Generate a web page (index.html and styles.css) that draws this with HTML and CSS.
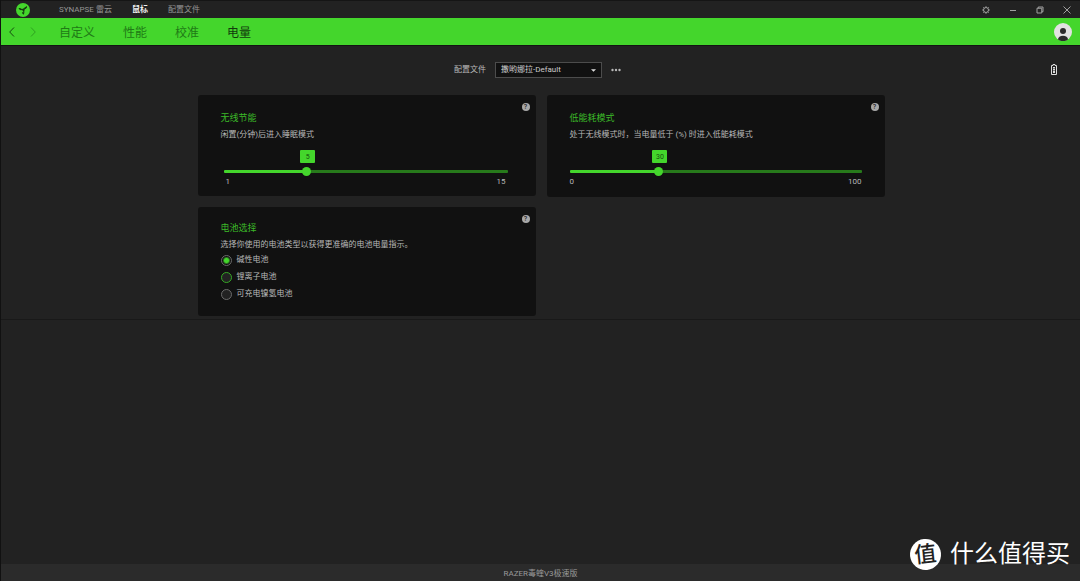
FILE: index.html
```html
<!DOCTYPE html>
<html lang="zh-CN">
<head>
<meta charset="utf-8">
<meta name="viewport" content="width=device-width, initial-scale=1">
<title>SYNAPSE 雷云</title>
<link rel="stylesheet" href="styles.css">
</head>
<body>
<div class="app">
  <header class="titlebar">
    <svg class="logo" viewBox="0 0 28 28" aria-hidden="true">
      <circle cx="14" cy="14" r="14" fill="#44d62c"/>
      <g fill="none" stroke="#163d10" stroke-width="2.2" stroke-linecap="round" stroke-linejoin="round">
        <path d="M15 14C16 17 16 19 15 21.500M15 13.500C12 13.500 9 13 6.500 11M15 13.500C16 11 18 9 21 8"/>
        <path d="M7 11L10 13.500M21 8L19 11M15 21.500L13 19.500"/>
      </g>
      <circle cx="15" cy="13.500" r="2.400" fill="#163d10"/>
    </svg>
    <nav class="tabs">
      <a class="tab" href="#synapse">SYNAPSE 雷云</a>
      <a class="tab tab-active" href="#mouse">鼠标</a>
      <a class="tab" href="#profiles">配置文件</a>
    </nav>
    <div class="window-controls">
      <button class="icon-button" type="button" aria-label="设置">
        <svg viewBox="0 0 16 16"><circle cx="8" cy="8" r="5"/><path d="M8 0.500v2.500M8 13v2.500M0.500 8H3M13 8h2.500M2.700 2.700l1.800 1.800M11.500 11.500l1.800 1.800M13.300 2.700l-1.800 1.800M4.500 11.500l-1.800 1.800"/></svg>
      </button>
      <button class="icon-button" type="button" aria-label="最小化">
        <svg viewBox="0 0 16 16"><path d="M2 9h12"/></svg>
      </button>
      <button class="icon-button" type="button" aria-label="还原">
        <svg viewBox="0 0 16 16"><path d="M2 4.500h9.500V14H2zM4.500 4.500V2H14v9.500h-2.500"/></svg>
      </button>
      <button class="icon-button" type="button" aria-label="关闭">
        <svg viewBox="0 0 16 16"><path d="M1 1l14 14M15 1L1 15"/></svg>
      </button>
    </div>
  </header>

  <div class="navbar">
    <button class="arrow" type="button" aria-label="后退"><svg viewBox="0 0 6 10"><path d="M5 0.500L0.700 5L5 9.500"/></svg></button>
    <button class="arrow arrow-off" type="button" aria-label="前进" disabled><svg viewBox="0 0 6 10"><path d="M1 0.500L5.300 5L1 9.500"/></svg></button>
    <nav class="sections">
      <a class="section" href="#customize">自定义</a>
      <a class="section" href="#performance">性能</a>
      <a class="section" href="#calibration">校准</a>
      <a class="section section-active" href="#power">电量</a>
    </nav>
    <button class="avatar" type="button" aria-label="用户">
      <svg viewBox="0 0 36 36"><circle cx="18" cy="18" r="18" fill="#e2e2e2"/><circle cx="18" cy="16" r="6" fill="#2b2b2b"/><path d="M8 33a10 7.500 0 0 1 20 0a18 18 0 0 1-20 0z" fill="#2b2b2b"/></svg>
    </button>
  </div>

  <main class="content">
    <div class="profile-bar">
      <label class="profile-label" for="profile">配置文件</label>
      <div class="select-wrap">
        <select class="profile-select" id="profile"><option>撒哟娜拉-Default</option></select>
        <svg class="caret" viewBox="0 0 6 3" aria-hidden="true"><path d="M0 0h6L3 3z"/></svg>
      </div>
      <button class="more" type="button" aria-label="更多">
        <svg viewBox="0 0 10 4"><circle cx="1.500" cy="2" r="1.200"/><circle cx="5" cy="2" r="1.200"/><circle cx="8.500" cy="2" r="1.200"/></svg>
      </button>
      <svg class="battery" viewBox="0 0 12 22" role="img" aria-label="电池"><path d="M4 3V1h4v2h3v18H1V3z" fill="none" stroke="#ddd" stroke-width="2"/><path d="M4 6h4v2.500H4zM4 9.500h4V12H4zM4 13h4v5H4z" fill="#ddd"/></svg>
    </div>

    <div class="cards">
      <section class="card">
        <button class="help" type="button" aria-label="帮助">?</button>
        <h2 class="card-title">无线节能</h2>
        <label class="card-text" for="sleep">闲置(分钟)后进入睡眠模式</label>
        <div class="slider slider-inset" style="--at: 0.286">
          <output class="bubble" for="sleep">5</output>
          <input class="range" id="sleep" type="range" min="1" max="15" value="5">
          <div class="limits"><span>1</span><span>15</span></div>
        </div>
      </section>

      <section class="card card-tall">
        <button class="help" type="button" aria-label="帮助">?</button>
        <h2 class="card-title">低能耗模式</h2>
        <label class="card-text" for="lowpower">处于无线模式时，当电量低于 (%) 时进入低能耗模式</label>
        <div class="slider" style="--at: 0.3">
          <output class="bubble" for="lowpower">30</output>
          <input class="range" id="lowpower" type="range" min="0" max="100" value="30">
          <div class="limits"><span>0</span><span>100</span></div>
        </div>
      </section>

      <section class="card card-options">
        <button class="help" type="button" aria-label="帮助">?</button>
        <h2 class="card-title">电池选择</h2>
        <p class="card-text">选择你使用的电池类型以获得更准确的电池电量指示。</p>
        <div class="options">
          <label class="option"><input class="radio" type="radio" name="battery" checked>碱性电池</label>
          <label class="option"><input class="radio radio-focus" type="radio" name="battery">锂离子电池</label>
          <label class="option"><input class="radio" type="radio" name="battery">可充电镍氢电池</label>
        </div>
      </section>
    </div>
  </main>

  <footer class="footer">RAZER毒蝰V3极速版</footer>
  <div class="watermark"><span class="watermark-badge">值</span><span>什么值得买</span></div>
</div>
</body>
</html>
```
FILE: styles.css
```css
* { box-sizing: border-box; }

body {
  margin: 0;
  background: #222;
  color: #b8b8b8;
  font: 8px/12px Roboto, "Noto Sans CJK SC", sans-serif;
}

a { color: inherit; text-decoration: none; }

button {
  display: flex;
  align-items: center;
  justify-content: center;
  padding: 0;
  border: 0;
  background: none;
  color: inherit;
}

.app {
  position: relative;
  display: flex;
  flex-direction: column;
  min-height: 100vh;
  border-left: 1px solid #111;
}

.titlebar {
  display: flex;
  align-items: center;
  height: 18px;
  padding: 0 7px 0 15px;
  border-top: 1px solid #151515;
}

.logo { width: 14px; height: 14px; }

.tabs { display: flex; gap: 20px; margin-left: 29px; color: #949494; }
.tab-active { color: #eee; font-weight: 700; }

.window-controls { display: flex; gap: 15px; margin-left: auto; }
.icon-button { width: 12px; height: 12px; }
.icon-button svg {
  width: 8px;
  height: 8px;
  fill: none;
  stroke: #a0a0a0;
  stroke-width: 2;
}

.navbar {
  display: flex;
  align-items: center;
  height: 27px;
  padding: 0 8px;
  background: #44d62c;
}

.arrow { width: 6px; height: 12px; margin-right: 15px; }
.arrow svg { width: 6px; height: 10px; fill: none; stroke: #164a10; }
.arrow-off svg { stroke: #2fa020; }

.sections {
  display: flex;
  gap: 28px;
  margin-left: 8px;
  padding-top: 2px;
  color: #207a16;
  font-size: 12px;
  line-height: 18px;
}
.section-active { color: #123b0c; }

.avatar { width: 18px; height: 18px; margin-left: auto; }
.avatar svg { width: 18px; height: 18px; }

.content {
  padding: 16px 0 3px;
  border-top: 1px solid #141414;
  border-bottom: 1px solid #191919;
}

.profile-bar {
  position: relative;
  display: flex;
  align-items: center;
  justify-content: center;
  height: 16px;
  padding-right: 6px;
}
.profile-label { margin-right: 9px; }
.select-wrap { position: relative; width: 107px; height: 16px; }
.profile-select {
  display: block;
  width: 100%;
  height: 16px;
  padding: 0 5px;
  appearance: none;
  border: 1px solid #4c4c4c;
  border-radius: 0;
  background: #111;
  color: #ccc;
  font: inherit;
}
.caret { position: absolute; top: 7px; right: 6px; width: 5px; height: 3px; fill: #ddd; }
.more { width: 10px; height: 12px; margin-left: 9px; }
.more svg { width: 10px; height: 4px; fill: #b8b8b8; }
.battery { position: absolute; top: 2px; right: 23px; width: 6px; height: 11px; }

.cards {
  display: grid;
  grid-template-columns: repeat(2, minmax(0, 338px));
  justify-content: center;
  align-items: start;
  gap: 10px 11px;
  margin-top: 17px;
  padding-left: 1px;
}

.card {
  position: relative;
  padding: 16px 23px 8px;
  border-radius: 3px;
  background: #111;
}
.card-tall { padding-bottom: 9px; }
.card-options { padding-top: 14px; padding-bottom: 16px; }
.card-title { margin: 0; color: #3bb928; font-size: 9px; font-weight: 400; line-height: 14px; }
.card-text { display: block; margin: 4px 0 0; }

.help {
  position: absolute;
  top: 8px;
  right: 6px;
  width: 8px;
  height: 8px;
  border-radius: 50%;
  background: #a8a8a8;
  color: #222;
  font: 500 7px/8px Roboto, sans-serif;
}

.slider { position: relative; margin-top: 9px; padding-top: 17px; }
.slider-inset { margin-right: 5px; margin-left: 3px; }
.slider-inset .limits { padding: 0 2px; }

.bubble {
  position: absolute;
  top: 0;
  left: calc(5px + (100% - 9px) * var(--at));
  width: 15px;
  height: 13px;
  margin-left: -7px;
  border-radius: 1px;
  background: #44d62c;
  color: #17500f;
  font-size: 7px;
  line-height: 14px;
  text-align: center;
}

.range {
  display: block;
  width: 100%;
  height: 9px;
  margin: 0;
  appearance: none;
  background: none;
}
.range::-webkit-slider-runnable-track {
  height: 3px;
  border-radius: 1px;
  background: linear-gradient(to right, #44d62c calc(100% * var(--at)), #277a1b 0);
}
.range::-webkit-slider-thumb {
  width: 9px;
  height: 9px;
  margin-top: -3px;
  appearance: none;
  border-radius: 50%;
  background: #44d62c;
}

.limits { display: flex; justify-content: space-between; }

.options { display: flex; flex-direction: column; gap: 5px; margin-top: 3px; }
.option { display: flex; align-items: center; gap: 5px; height: 12px; }

.radio {
  width: 11px;
  height: 11px;
  margin: 0;
  appearance: none;
  border: 1px solid #6a6a6a;
  border-radius: 50%;
  background: #222;
}
.radio:checked { background: radial-gradient(circle, #44d62c 2px, #111 4px); }
.radio-focus { border-color: #35a825; }

.footer {
  height: 17px;
  margin-top: auto;
  background: #2b2b2b;
  color: #999;
  line-height: 19px;
  text-align: center;
}

.watermark {
  position: absolute;
  right: 10px;
  bottom: 11px;
  display: flex;
  align-items: center;
  gap: 9px;
  color: #fff;
  font-size: 24px;
  line-height: 32px;
}
.watermark-badge {
  width: 31px;
  height: 31px;
  border-radius: 50%;
  background: #fff;
  color: #222;
  font-size: 22px;
  font-weight: 500;
  line-height: 31px;
  text-align: center;
  transform: rotate(-6deg);
}
```
